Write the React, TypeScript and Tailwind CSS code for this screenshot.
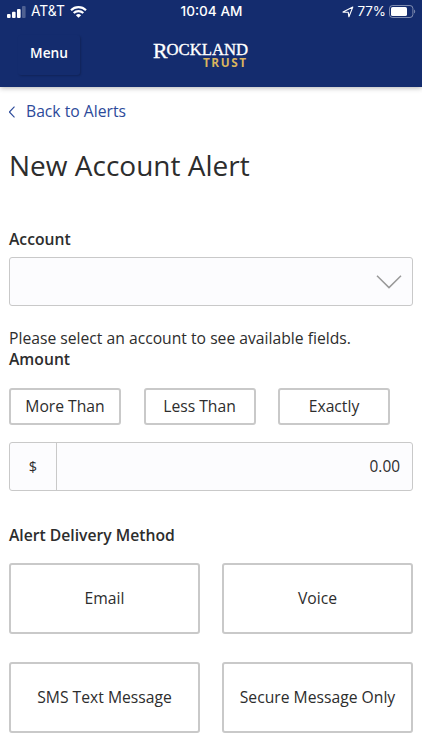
import { clsx } from "clsx";

const amountOptions = ["More Than", "Less Than", "Exactly"];
const deliveryMethods = ["Email", "Voice", "SMS Text Message", "Secure Message Only"];

function SignalIcon() {
  return (
    <svg width="19" height="12" viewBox="0 0 19 12" fill="white">
      <rect x="0" y="8" width="3.6" height="4" rx="1" />
      <rect x="5" y="5.8" width="3.6" height="6.2" rx="1" />
      <rect x="10" y="3" width="3.6" height="9" rx="1" />
      <rect x="15" y="0" width="3.6" height="12" rx="1" opacity="0.25" />
    </svg>
  );
}

function WifiIcon() {
  return (
    <svg width="17" height="12" viewBox="0 0 17 12" fill="none" stroke="white" strokeWidth="2.1">
      <path d="M1 4.2a10.7 10.7 0 0 1 15 0" />
      <path d="M3.7 7.1a6.8 6.8 0 0 1 9.6 0" />
      <path d="M5.9 9.2a3.7 3.7 0 0 1 5.2 0L8.5 11.8z" fill="white" stroke="none" />
    </svg>
  );
}

function LocationIcon() {
  return (
    <svg width="12" height="12" viewBox="0 0 12 12" fill="none" stroke="white" strokeWidth="1.1" strokeLinejoin="round">
      <path d="M1 6.1L10.8 1.1L6.9 10.8L6.2 6.2z" />
    </svg>
  );
}

function BatteryIcon() {
  return (
    <svg width="27" height="13" viewBox="0 0 27 13" fill="none">
      <rect x="0.5" y="0.5" width="23.4" height="12" rx="3" stroke="white" strokeOpacity="0.45" />
      <rect x="2" y="2" width="16" height="9" rx="1.6" fill="white" />
      <path d="M25.2 4.5c1.3.6 1.3 3.4 0 4z" fill="white" fillOpacity="0.5" />
    </svg>
  );
}

function Logo() {
  return (
    <svg
      width="100"
      height="32"
      viewBox="0 0 100 32"
      className="overflow-visible"
      fontFamily="'Liberation Serif', serif"
    >
      <g fill="white" stroke="white" strokeWidth="0.35">
        <text x="1" y="18" fontSize="22" textLength="14.5" lengthAdjust="spacingAndGlyphs">
          R
        </text>
        <text x="14.5" y="14.8" fontSize="16.2" textLength="81.5" lengthAdjust="spacingAndGlyphs">
          OCKLAND
        </text>
      </g>
      <text
        x="51"
        y="26.8"
        fontSize="11.8"
        fontWeight="700"
        fontFamily="'Open Sans', sans-serif"
        fill="#d9b45e"
        textLength="43"
        lengthAdjust="spacing"
      >
        TRUST
      </text>
    </svg>
  );
}

function OptionButton({ label, className }: { label: string; className?: string }) {
  return (
    <button
      type="button"
      className={clsx("rounded-[3px] border-2 border-[#c9c9c9] bg-white whitespace-nowrap", className)}
    >
      {label}
    </button>
  );
}

export default function App() {
  return (
    <div className="h-[750px] w-full overflow-hidden bg-white font-['Open_Sans',sans-serif] text-[15.7px] text-[#2d2d2d]">
      <header className="h-[87px] bg-[#142c6e] text-white shadow-[0_1px_5px_rgba(0,0,0,0.3)]">
        <div className="grid h-[23px] grid-cols-[1fr_auto_1fr] items-center pl-[7px] pr-[6px] font-[Inter,sans-serif] text-[13.8px] leading-[23px]">
          <div className="flex items-center gap-[5px]">
            <SignalIcon />
            <span className="w-[34px] whitespace-nowrap">AT&amp;T</span>
            <WifiIcon />
          </div>
          <span className="text-[13.6px] font-medium">10:04 AM</span>
          <div className="flex items-center justify-end gap-[3px]">
            <LocationIcon />
            <span className="text-[13.4px]">77%</span>
            <BatteryIcon />
          </div>
        </div>
        <div className="grid h-16 grid-cols-[1fr_auto_1fr] items-start pl-[18px]">
          <button
            type="button"
            className="mt-3 h-10 w-[62px] rounded-[3px] pb-[3px] text-[13.7px] font-semibold shadow-[1px_1px_2px_rgba(0,0,0,0.2)]"
          >
            Menu
          </button>
          <div className="mt-[17px] mr-[36px]">
            <Logo />
          </div>
        </div>
      </header>

      <main className="px-[9px]">
        <a href="#" className="mt-[14px] flex h-[22px] items-center text-[#2c4a9a]">
          <svg width="7" height="12" viewBox="0 0 7 12" fill="none" stroke="currentColor" strokeWidth="1.1">
            <path d="M5.5 .7L.4 6l5.1 5.3" />
          </svg>
          <span className="ml-[10px]">Back to Alerts</span>
        </a>

        <h1 className="mt-[22px] h-10 text-[28px] leading-10">New Account Alert</h1>

        <h2 className="mt-11 h-5 font-semibold leading-5">Account</h2>
        <div className="mt-[8px] flex h-[49px] items-center justify-end rounded-[3px] border border-[#c9c9c9] bg-[#fcfcfe] pr-[10px]">
          <svg width="26" height="14" viewBox="0 0 26 14" fill="none" stroke="#999999" strokeWidth="1.5">
            <path d="M1 .8l12 11.8L25 .8" />
          </svg>
        </div>

        <p className="mt-[22px] h-[21px] whitespace-nowrap leading-[21px]">
          Please select an account to see available fields.
        </p>
        <h2 className="h-[21px] font-semibold leading-[21px]">Amount</h2>
        <div className="mt-[18px] flex gap-[22.5px]">
          {amountOptions.map((label) => (
            <OptionButton key={label} label={label} className="h-[37px] w-28" />
          ))}
        </div>

        <div className="mt-[17px] flex h-[49px] rounded-[3px] border border-[#c9c9c9] bg-[#fcfcfe]">
          <span className="flex w-[47px] items-center justify-center border-r border-[#c9c9c9] text-[14.5px]">$</span>
          <span className="flex flex-1 items-center justify-end pr-3 text-[15.4px]">0.00</span>
        </div>

        <h2 className="mt-[33px] h-[22px] font-semibold leading-[22px]">Alert Delivery Method</h2>
        <div className="mt-[17px] grid grid-cols-2 gap-x-[22px] gap-y-7">
          {deliveryMethods.map((label) => (
            <OptionButton key={label} label={label} className="h-[71px]" />
          ))}
        </div>
      </main>
    </div>
  );
}
